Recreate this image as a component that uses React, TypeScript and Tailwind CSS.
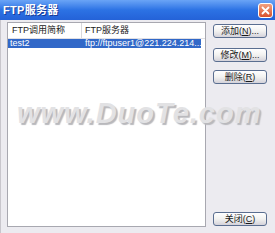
import React from "react";

const font = { fontFamily: '"Liberation Sans", "Noto Sans CJK SC", sans-serif' };

function Btn({ children, className = "" }: { children: React.ReactNode; className?: string }) {
  return (
    <div
      className={
        "h-[14px] w-[54px] rounded-[3px] border border-[#5a6e90] bg-gradient-to-b from-[#ffffff] via-[#f2f2f0] to-[#d4d2da] flex items-center justify-center text-[9px] leading-none text-[#1a1a1a] " +
        className
      }
    >
      {children}
    </div>
  );
}

export default function App() {
  return (
    <div className="relative w-[275px] h-[233px] bg-[#ecebf0] overflow-hidden flex flex-col" style={font}>
      <div className="h-[20px] shrink-0 bg-gradient-to-b from-[#6aa4f6] via-[#2c72e4] to-[#2462d8] flex items-center justify-between pl-[3px] pr-[2px]">
        <span className="text-white font-bold text-[11px] leading-none tracking-[0.3px] [text-shadow:1px_1px_0_#163c98]">FTP服务器</span>
        <div className="w-[15px] h-[15px] rounded-[3px] border border-white bg-gradient-to-b from-[#f0a080] to-[#d8502a] flex items-center justify-center">
          <svg width="9" height="9" viewBox="0 0 9 9">
            <path d="M1.5 1.5 L7.5 7.5 M7.5 1.5 L1.5 7.5" stroke="white" strokeWidth="1.8" strokeLinecap="round" />
          </svg>
        </div>
      </div>
      <div className="flex flex-1 pl-[2px] pb-[5px] border-l border-[#c8c6cc]">
        <div className="ml-[4px] mt-[2px] w-[199px] h-[205px] bg-white border border-[#a8a8b0] flex flex-col">
          <div className="flex h-[16px] border-b border-[#e0dfe4] text-[9px] leading-none text-[#222] items-center">
            <div className="w-[74px] pl-[4px] border-r border-[#d8d8dc] h-full flex items-center">FTP调用简称</div>
            <div className="pl-[3px]">FTP服务器</div>
          </div>
          <div className="flex h-[9px] w-[193px] bg-[#3168c8] text-white text-[9px] leading-[9px] items-center overflow-hidden">
            <div className="w-[74px] pl-[2px] shrink-0">test2</div>
            <div className="pl-[3px] whitespace-nowrap">ftp://ftpuser1@221.224.214...</div>
          </div>
        </div>
        <div className="ml-[7px] mt-[2px] flex flex-col">
          <Btn className="mt-[2px]">添加(<u>N</u>)...</Btn>
          <Btn className="mt-[10px]">修改(<u>M</u>)...</Btn>
          <Btn className="mt-[8px]">删除(<u>R</u>)</Btn>
          <Btn className="mt-auto mb-[2px]">关闭(<u>C</u>)</Btn>
        </div>
      </div>
      <div
        className="absolute left-[17px] top-[99px] text-[29px] font-bold italic text-[#e2e2e4] leading-none tracking-[1px] [text-shadow:2px_2px_1px_#b8b8bc]"
        style={{ fontFamily: '"Liberation Sans", sans-serif' }}
      >
        www.DuoTe.com
      </div>
    </div>
  );
}
